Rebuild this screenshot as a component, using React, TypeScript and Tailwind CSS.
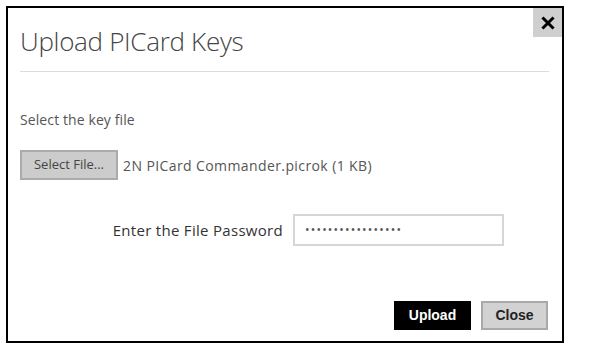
function CloseIcon() {
  return (
    <svg width="14" height="14" viewBox="0 0 14 14">
      <path d="M2.5 2.5 L11.5 11.5 M11.5 2.5 L2.5 11.5" stroke="#000" strokeWidth="3" strokeLinecap="square" />
    </svg>
  )
}

export default function App() {
  const font = { fontFamily: '"Open Sans", "Noto Sans", sans-serif' }
  return (
    <div className="w-[599px] h-[348px] bg-white p-[6px]" style={font}>
      <div className="relative w-[558px] h-[337px] border-2 border-black bg-white">
        <button className="absolute top-0 right-0 w-[29px] h-[29px] bg-[#cfcfcf] flex items-center justify-center">
          <CloseIcon />
        </button>

        <div className="px-[12px]">
          <h1 className="pt-[15px] text-[26px] font-light leading-[36px] text-[#444] tracking-[-0.3px]">Upload PICard Keys</h1>
          <div className="mt-[12px] h-px w-[529px] bg-[#dcdcdc]" />

          <p className="mt-[38px] text-[14px] leading-[20px] text-[#555] tracking-[0.1px]">Select the key file</p>

          <div className="mt-[20px] flex items-center gap-[5px]">
            <button className="w-[98px] h-[30px] bg-[#cccccc] border-2 border-[#ababab] text-[13px] text-[#444]">
              Select File...
            </button>
            <span className="text-[14px] text-[#555] tracking-[0.4px]">2N PICard Commander.picrok (1 KB)</span>
          </div>

          <div className="mt-[34px] flex items-center">
            <label className="w-[273px] pr-[10px] text-right text-[15px] text-[#333] tracking-[0.3px]">Enter the File Password</label>
            <div className="w-[211px] h-[32px] border-2 border-[#d6d6d6] flex items-center px-[10px] text-[12px] tracking-[1.2px] text-[#555]">
              •••••••••••••••••
            </div>
          </div>

          <div className="mt-[55px] flex justify-end gap-[10px] pr-[2px]">
            <button className="w-[77px] h-[29px] bg-black text-white text-[14px] font-bold" style={{ fontFamily: '"Liberation Sans", Arial, sans-serif' }}>
              Upload
            </button>
            <button className="w-[67px] h-[29px] bg-[#d2d2d2] border-2 border-[#a9a9a9] text-[#222] text-[14px] font-bold" style={{ fontFamily: '"Liberation Sans", Arial, sans-serif' }}>
              Close
            </button>
          </div>
        </div>
      </div>
    </div>
  )
}
